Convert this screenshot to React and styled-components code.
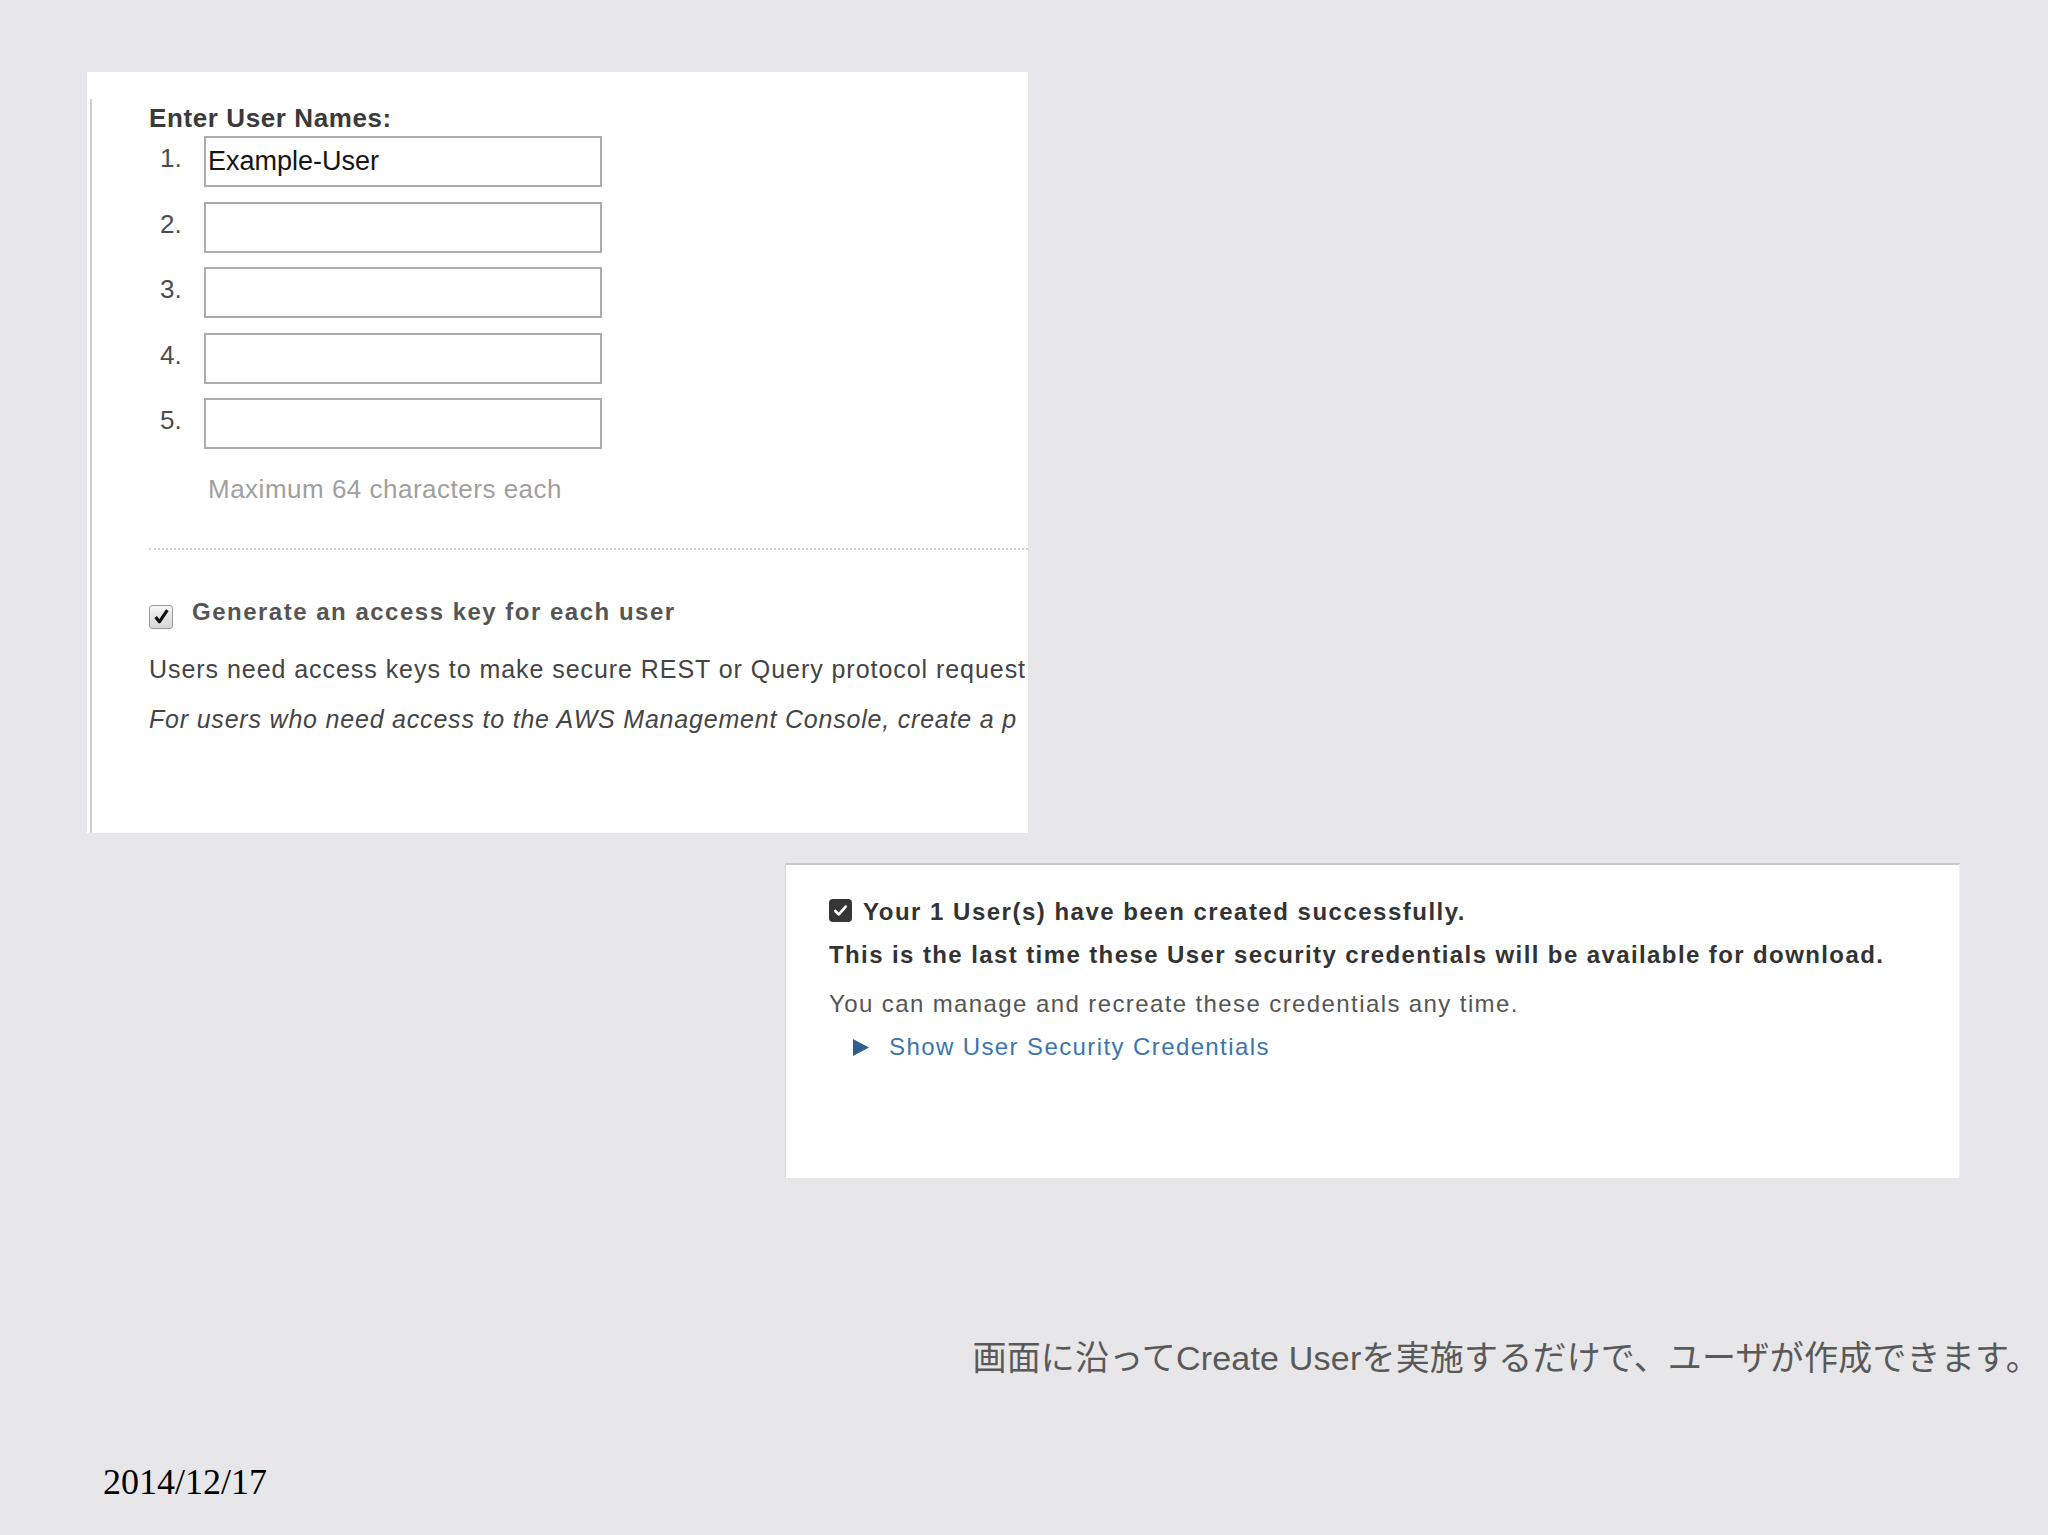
import React from "react";
import styled, { createGlobalStyle } from "styled-components";

const GlobalStyle = createGlobalStyle`
  html, body {
    margin: 0;
    padding: 0;
    background: #e7e6e9;
  }
`;

const Page = styled.div`
  width: 2048px;
  height: 1535px;
  box-sizing: border-box;
  display: flex;
  flex-direction: column;
  background: #e7e6e9;
  font-family: "Liberation Sans", Arial, sans-serif;
  overflow: hidden;
`;

const FormPanel = styled.div`
  margin: 72px 0 0 87px;
  width: 941px;
  height: 761px;
  box-sizing: border-box;
  padding: 27px 0 0 3px;
  background: #fff;
  display: flex;
  overflow: hidden;
`;

const FormBody = styled.div`
  flex: 1;
  border-left: 2px solid #cfcfcf;
  padding: 4px 0 0 57px;
  display: flex;
  flex-direction: column;
  min-width: 0;
`;

const Heading = styled.div`
  font-size: 26px;
  line-height: 30px;
  font-weight: bold;
  color: #3a3a3a;
  letter-spacing: 0.6px;
`;

const NameList = styled.div`
  display: flex;
  flex-direction: column;
  gap: 14.6px;
  margin-top: 3px;
`;

const NameRow = styled.div`
  display: flex;
  align-items: flex-start;
`;

const RowNumber = styled.span`
  width: 55px;
  box-sizing: border-box;
  padding: 7px 0 0 11px;
  font-size: 26px;
  line-height: 30px;
  color: #4d4d4d;
`;

const NameField = styled.input`
  width: 398px;
  height: 51px;
  box-sizing: border-box;
  margin: 0;
  padding: 0 0 0 2px;
  border: 2px solid #acacac;
  background: #fff;
  font-family: "Liberation Sans", Arial, sans-serif;
  font-size: 27px;
  color: #151515;
  outline: none;
`;

const Hint = styled.div`
  margin: 24.6px 0 0 55px;
  padding-left: 4px;
  font-size: 26px;
  line-height: 30px;
  letter-spacing: 0.5px;
  color: #a0a0a0;
`;

const Divider = styled.div`
  margin-top: 44px;
  border-top: 2px dotted #d2d2d2;
`;

const CheckRow = styled.div`
  display: flex;
  align-items: flex-start;
  gap: 19px;
  margin-top: 48px;
`;

const OldCheckbox = styled.span`
  flex: none;
  width: 24px;
  height: 24px;
  margin-top: 7px;
  box-sizing: border-box;
  border: 1px solid #9a9a9a;
  border-radius: 3px;
  background: linear-gradient(#f6f6f6, #d6d6d6);
  display: flex;
  align-items: center;
  justify-content: center;
`;

const CheckLabel = styled.span`
  font-size: 24px;
  line-height: 28px;
  font-weight: bold;
  color: #555;
  letter-spacing: 1.5px;
  white-space: nowrap;
`;

const Paragraph = styled.p`
  margin: ${(p) => p.$top}px 0 0;
  font-size: 25px;
  line-height: 29px;
  color: #444;
  font-style: ${(p) => (p.$italic ? "italic" : "normal")};
  letter-spacing: ${(p) => (p.$italic ? 0.8 : 0.95)}px;
  white-space: nowrap;
`;

const ResultPanel = styled.div`
  margin: 30px 0 0 785px;
  width: 1175px;
  height: 315px;
  box-sizing: border-box;
  background: #fff;
  border-top: 2px solid #c8c8cc;
  border-left: 1px solid #d6d6d9;
  border-right: 1px solid #f0f0f2;
  padding: 33px 0 0 43px;
  display: flex;
  flex-direction: column;
`;

const SuccessLine = styled.div`
  display: flex;
  align-items: flex-start;
  gap: 11px;
`;

const DarkCheck = styled.span`
  flex: none;
  width: 23px;
  height: 23px;
  margin-top: 1px;
  border-radius: 4px;
  background: #363636;
  display: flex;
  align-items: center;
  justify-content: center;
`;

const Strong = styled.div`
  margin-top: ${(p) => p.$top || 0}px;
  font-size: 24px;
  line-height: 28px;
  font-weight: bold;
  color: #333;
  letter-spacing: ${(p) => p.$spacing || 0}px;
  white-space: nowrap;
`;

const Note = styled.div`
  margin-top: 21px;
  font-size: 24px;
  line-height: 28px;
  letter-spacing: 1.4px;
  color: #555;
  white-space: nowrap;
`;

const Disclosure = styled.div`
  display: flex;
  align-items: center;
  gap: 20px;
  margin: 15px 0 0 24px;
`;

const LinkText = styled.a`
  font-size: 24px;
  line-height: 28px;
  letter-spacing: 1.4px;
  color: #3b74b1;
  text-decoration: none;
  cursor: pointer;
  white-space: nowrap;
`;

const Caption = styled.div`
  margin-top: 160px;
  padding-right: 8px;
  text-align: right;
  font-family: "Liberation Sans", "Noto Sans CJK JP", sans-serif;
  font-size: 34px;
  line-height: 40px;
  letter-spacing: 0.2px;
  color: #595959;
  white-space: nowrap;
`;

const DateStamp = styled.div`
  margin-top: 84px;
  padding-left: 103px;
  font-family: "Liberation Serif", "Times New Roman", serif;
  font-size: 36px;
  line-height: 40px;
  color: #000;
`;

const names = ["Example-User", "", "", "", ""];

export default function App() {
  return (
    <Page>
      <GlobalStyle />
      <FormPanel>
        <FormBody>
          <Heading>Enter User Names:</Heading>
          <NameList>
            {names.map((name, i) => (
              <NameRow key={i}>
                <RowNumber>{i + 1}.</RowNumber>
                <NameField defaultValue={name} />
              </NameRow>
            ))}
          </NameList>
          <Hint>Maximum 64 characters each</Hint>
          <Divider />
          <CheckRow>
            <OldCheckbox>
              <svg width="17" height="17" viewBox="0 0 16 16">
                <path d="M2.5 8.5 L6 13 L13.5 2" fill="none" stroke="#111" strokeWidth="3" strokeLinejoin="round" />
              </svg>
            </OldCheckbox>
            <CheckLabel>Generate an access key for each user</CheckLabel>
          </CheckRow>
          <Paragraph $top={26}>
            Users need access keys to make secure REST or Query protocol request
          </Paragraph>
          <Paragraph $top={21} $italic>
            For users who need access to the AWS Management Console, create a p
          </Paragraph>
        </FormBody>
      </FormPanel>

      <ResultPanel>
        <SuccessLine>
          <DarkCheck>
            <svg width="15" height="15" viewBox="0 0 16 16">
              <path d="M2.5 8.5 L6.3 12.2 L13.5 3.8" fill="none" stroke="#fff" strokeWidth="2.8" strokeLinecap="round" strokeLinejoin="round" />
            </svg>
          </DarkCheck>
          <Strong $spacing={1.5}>Your 1 User(s) have been created successfully.</Strong>
        </SuccessLine>
        <Strong $top={15} $spacing={1.4}>
          This is the last time these User security credentials will be available for download.
        </Strong>
        <Note>You can manage and recreate these credentials any time.</Note>
        <Disclosure>
          <svg width="16" height="17" viewBox="0 0 16 17">
            <polygon points="0,0 16,8.5 0,17" fill="#2f5f8e" />
          </svg>
          <LinkText>Show User Security Credentials</LinkText>
        </Disclosure>
      </ResultPanel>

      <Caption>画面に沿ってCreate Userを実施するだけで、ユーザが作成できます。</Caption>
      <DateStamp>2014/12/17</DateStamp>
    </Page>
  );
}
